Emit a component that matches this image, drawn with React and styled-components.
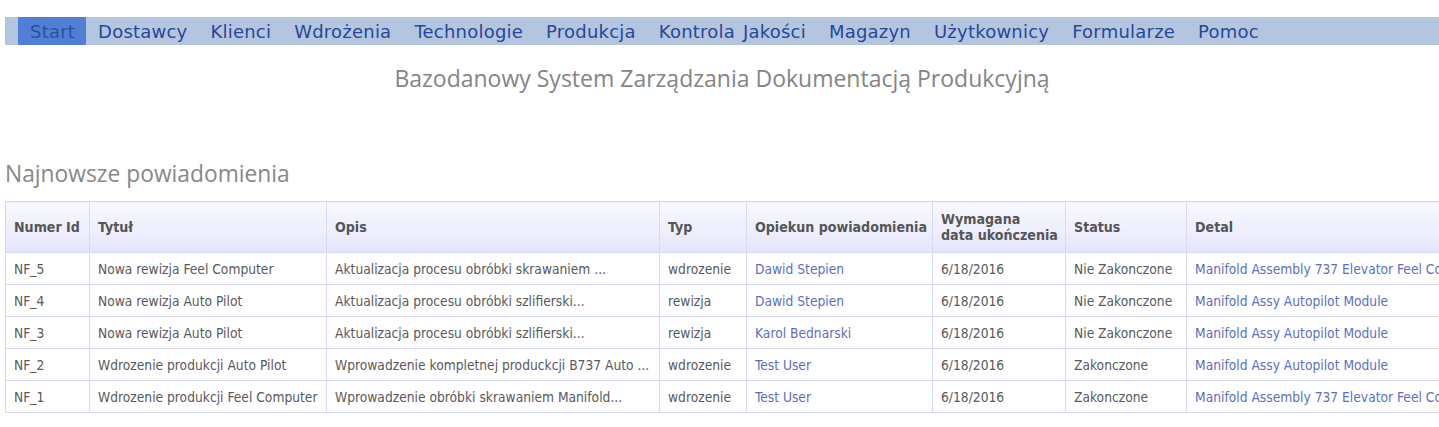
import React from "react";
import styled, { createGlobalStyle } from "styled-components";

const GlobalStyle = createGlobalStyle`
  html, body {
    margin: 0;
    padding: 0;
    background: #ffffff;
    overflow: hidden;
  }
`;

const Page = styled.div`
  padding: 17px 0 0 5px;
  font-family: "DejaVu Sans", Verdana, sans-serif;
`;

const NavBar = styled.ul`
  display: flex;
  align-items: stretch;
  height: 28px;
  margin: 0;
  padding: 0 0 0 13px;
  list-style: none;
  background: #b4c6df;
`;

const NavItem = styled.li`
  display: flex;
  align-items: center;
  padding: 0 11px 0 12px;
  font-size: 18px;
  letter-spacing: 0.22px;
  word-spacing: 2px;
  color: ${(props) => (props.active ? "#2e4f99" : "#27479a")};
  background: ${(props) => (props.active ? "#4f7fd6" : "transparent")};
  cursor: pointer;
`;

const Title = styled.h1`
  margin: 18px 0 0;
  height: 30px;
  line-height: 30px;
  text-align: center;
  font-family: "Open Sans", sans-serif;
  font-weight: 400;
  font-size: 23px;
  color: #858585;
`;

const SectionTitle = styled.h2`
  margin: 66px 0 12px;
  height: 30px;
  line-height: 30px;
  font-family: "Open Sans", sans-serif;
  font-weight: 400;
  font-size: 22.8px;
  color: #888888;
`;

const Table = styled.table`
  width: 1520px;
  table-layout: fixed;
  border-collapse: collapse;
  font-family: "DejaVu Sans", Verdana, sans-serif;
  font-stretch: condensed;
  font-size: 13.7px;
`;

const HeadCell = styled.th`
  height: 50px;
  padding: 0 8px;
  text-align: left;
  white-space: nowrap;
  font-size: 14.1px;
  font-weight: 700;
  color: #555555;
  line-height: 16px;
  border: 1px solid #d9d9f6;
  background: linear-gradient(#f9f9ff, #e5e5fb);
`;

const Cell = styled.td`
  height: 31px;
  padding: 0 8px;
  white-space: nowrap;
  overflow: hidden;
  color: ${(props) => (props.link ? "#5d6fc4" : "#5a5a5a")};
  border: 1px solid #d9d9f6;
`;

const columns = [
  { key: "id", title: "Numer Id", width: 84 },
  { key: "title", title: "Tytuł", width: 237 },
  { key: "desc", title: "Opis", width: 333 },
  { key: "type", title: "Typ", width: 87 },
  { key: "owner", title: "Opiekun powiadomienia", width: 186 },
  {
    key: "date",
    title: (
      <>
        Wymagana
        <br />
        data ukończenia
      </>
    ),
    width: 133,
  },
  { key: "status", title: "Status", width: 121 },
  { key: "detail", title: "Detal", width: 339 },
];

const rows = [
  {
    id: "NF_5",
    title: "Nowa rewizja Feel Computer",
    desc: "Aktualizacja procesu obróbki skrawaniem ...",
    type: "wdrozenie",
    owner: "Dawid Stepien",
    date: "6/18/2016",
    status: "Nie Zakonczone",
    detail: "Manifold Assembly 737 Elevator Feel Computer",
  },
  {
    id: "NF_4",
    title: "Nowa rewizja Auto Pilot",
    desc: "Aktualizacja procesu obróbki szlifierski...",
    type: "rewizja",
    owner: "Dawid Stepien",
    date: "6/18/2016",
    status: "Nie Zakonczone",
    detail: "Manifold Assy Autopilot Module",
  },
  {
    id: "NF_3",
    title: "Nowa rewizja Auto Pilot",
    desc: "Aktualizacja procesu obróbki szlifierski...",
    type: "rewizja",
    owner: "Karol Bednarski",
    date: "6/18/2016",
    status: "Nie Zakonczone",
    detail: "Manifold Assy Autopilot Module",
  },
  {
    id: "NF_2",
    title: "Wdrozenie produkcji Auto Pilot",
    desc: "Wprowadzenie kompletnej produckcji B737 Auto ...",
    type: "wdrozenie",
    owner: "Test User",
    date: "6/18/2016",
    status: "Zakonczone",
    detail: "Manifold Assy Autopilot Module",
  },
  {
    id: "NF_1",
    title: "Wdrozenie produkcji Feel Computer",
    desc: "Wprowadzenie obróbki skrawaniem Manifold...",
    type: "wdrozenie",
    owner: "Test User",
    date: "6/18/2016",
    status: "Zakonczone",
    detail: "Manifold Assembly 737 Elevator Feel Computer",
  },
];

const menu = [
  "Start",
  "Dostawcy",
  "Klienci",
  "Wdrożenia",
  "Technologie",
  "Produkcja",
  "Kontrola Jakości",
  "Magazyn",
  "Użytkownicy",
  "Formularze",
  "Pomoc",
];

const App = () => {
  return (
    <>
      <GlobalStyle />
      <Page>
        <NavBar>
          {menu.map((item, i) => (
            <NavItem key={item} active={i === 0}>
              {item}
            </NavItem>
          ))}
        </NavBar>
        <Title>Bazodanowy System Zarządzania Dokumentacją Produkcyjną</Title>
        <SectionTitle>Najnowsze powiadomienia</SectionTitle>
        <Table>
          <colgroup>
            {columns.map((col) => (
              <col key={col.key} style={{ width: col.width }} />
            ))}
          </colgroup>
          <thead>
            <tr>
              {columns.map((col) => (
                <HeadCell key={col.key}>{col.title}</HeadCell>
              ))}
            </tr>
          </thead>
          <tbody>
            {rows.map((row) => (
              <tr key={row.id}>
                {columns.map((col) => (
                  <Cell key={col.key} link={col.key === "owner" || col.key === "detail"}>
                    {row[col.key]}
                  </Cell>
                ))}
              </tr>
            ))}
          </tbody>
        </Table>
      </Page>
    </>
  );
};

export default App;
